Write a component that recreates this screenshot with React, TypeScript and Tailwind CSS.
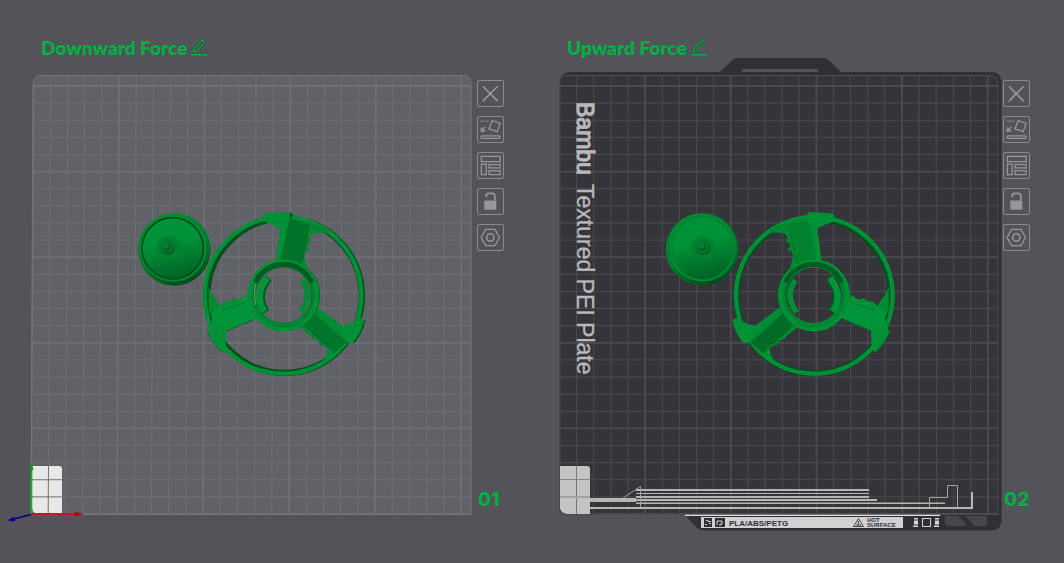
import React from "react";

type Line = { at: number; end: number; major: boolean };

const ACTIONS = ["Delete plate", "Auto orient", "Arrange objects", "Lock plate", "Plate settings"];

function ActionIcon({ name }: { name: string }) {
  return (
    <svg viewBox="1 1 26 26" className="size-full" fill="none" stroke="currentColor" strokeWidth="1.3">
      {name === "Delete plate" && <path d="M6 6.500 21.500 22M21.500 6.500 6 22" strokeWidth="1.700" />}
      {name === "Auto orient" && (
        <>
          <path d="M15.700 4.800 24 7.600 21 16.200 12.400 13.400Z" />
          <rect x="4" y="20.600" width="20" height="2.600" rx="1.300" />
          <path d="M3.500 5.500h9" strokeDasharray="1.400 .9" strokeWidth="1.600" opacity=".7" />
          <path d="M8.500 11.500 4.800 14.500M4.400 12v4l3.600-.8-2-1.600" />
        </>
      )}
      {name === "Arrange objects" && (
        <>
          <rect x="4.500" y="4.500" width="19.500" height="5.500" />
          <rect x="4.500" y="12.500" width="5" height="11" />
          <rect x="12.500" y="13" width="11.500" height="3.500" />
          <rect x="12.500" y="19.500" width="11.500" height="4" />
        </>
      )}
      {name === "Lock plate" && (
        <>
          <rect x="7.500" y="13" width="12.500" height="9.500" fill="currentColor" stroke="none" />
          <path d="M9.600 9.500V8q0-2.500 2.500-2.500h3.600q2.800 0 2.800 2.800V13" strokeWidth="1.800" />
        </>
      )}
      {name === "Plate settings" && (
        <>
          <path d="M4.200 14 9 5.600h9.600L23.400 14l-4.800 8.400H9Z" />
          <circle cx="13.800" cy="14" r="3.800" strokeWidth="1.600" />
        </>
      )}
    </svg>
  );
}

function PencilIcon() {
  return (
    <svg viewBox="0 0 16 17" className="h-[17px] w-4" fill="none" stroke="currentColor">
      <path d="M2.300 12.800 2.800 9.600 10.500 1.700q.8-.7 1.600 0l.9.9q.8.8 0 1.600L5.300 12.100Z" stroke="#2c4c3d" strokeWidth="2.200" />
      <path d="M2.300 12.800 2.800 9.600 10.500 1.700q.8-.7 1.600 0l.9.9q.8.8 0 1.600L5.300 12.100Z" strokeWidth="1.200" />
      <path d="M0 14.300h16" stroke="#2c4c3d" strokeWidth=".8" />
      <path d="M0 15.600h16" strokeWidth="1.800" />
    </svg>
  );
}

function columns(top: number, bottom: number, topPitch: number, bottomPitch: number): Line[] {
  return Array.from({ length: 26 }, (_, i) => ({
    at: top + topPitch * i,
    end: bottom + bottomPitch * i,
    major: i % 5 === 0,
  }));
}

function Grid({ cols, left, right, color }: { cols: Line[]; left: number; right: number; color: string }) {
  return (
    <g stroke={color}>
      {cols.map((c, i) => (
        <path key={i} d={`M${c.at} 75.5L${c.end} 514`} strokeWidth={c.major ? 1.8 : 1} />
      ))}
      {Array.from({ length: 26 }, (_, i) => (
        <path key={i} d={`M${left} ${86 + i * 17.12}H${right}`} strokeWidth={i % 5 === 0 ? 1.8 : 1} />
      ))}
    </g>
  );
}

function Rotor({ mirrored = false }: { mirrored?: boolean }) {
  const topPanel = mirrored ? "#00822f" : "#00722a";
  const sidePanel = mirrored ? "#006c27" : "#00752c";
  return (
    <g transform={mirrored ? "translate(937 0) scale(-1 1)" : undefined}>
      {mirrored ? (
        <circle cx="461" cy="288" r="232" fill="none" stroke="#004f1c" strokeWidth="18" />
      ) : (
        <circle cx="463.500" cy="287" r="232" fill="none" stroke="#004f1c" strokeWidth="19" />
      )}
      <circle cx="459" cy="286" r="235" fill="none" stroke="#009137" strokeWidth="13" />

      {/* upper arm */}
      <path d="M470 50 541 66Q580 80 600 100 575 95 550 99L541 108 523 168 532 205 437 190 452 84Z" fill="#008a33" />
      <path d="M478 56 541 72 517 194 449 184Z" fill={topPanel} />
      <path d="M532 95 512 180" stroke="#006b27" strokeWidth="2" />
      <path d="M545 75 588 94" stroke="#005a20" strokeWidth="2" strokeDasharray="4 3" />
      <circle cx="537" cy="121" r="7" fill="#008331" />
      <circle cx="531" cy="148" r="7" fill="#008331" />
      {!mirrored && <path d="M478 37 487 40 488 50 480 56Z" fill="#00561f" />}
      <path d="M400 42Q430 36 480 37L476 62 450 185 437 185 450 85 402 64Z" fill="#009137" />

      {/* left arm */}
      <path d="M236 262 248 285 272 320 245 350 236 330Z" fill="#008a33" />
      <path d="M246 336 268 320 282 306 290 306 300 303 316 296 328 299 345 286 385 320 384 352 288 392 236 392 246 370Z" fill="#00953a" />
      <path d="M232 394 290 372 287 440 277 458Q248 430 232 394Z" fill="#009137" />
      <path d="M288 394 368 360" stroke="#006727" strokeWidth="3" />
      <path d="M233 396Q246 430 276 457" stroke="#00682a" strokeWidth="2" fill="none" />
      <path d="M278 331 350 307M276 325 283 321" stroke="#005a20" strokeWidth="2" strokeDasharray="7 2" />
      <circle cx="287" cy="311" r="7" fill="#008b34" />
      <circle cx="312" cy="302" r="7" fill="#008b34" />

      {/* right arm */}
      <path d="M594 442 590 465Q578 488 558 495 600 482 625 452Z" fill="#009137" />
      <circle cx="552" cy="411" r="7" fill="#00802f" />
      <circle cx="574" cy="430" r="7" fill="#00802f" />
      <path d="M545 325 565 323 640 380 655 428 612 460 506 380Z" fill="#008b34" />
      <path d="M546 334 650 427 612 460 518 374Z" fill={sidePanel} />
      <path d="M546 395 584 432 594 428" stroke="#006325" strokeWidth="3" fill="none" />
      <path d="M692 354 705 360Q698 398 672 429L650 427 635 378Q670 370 692 354Z" fill="#009137" />
      {!mirrored && <path d="M704 361Q696 400 670 429" stroke="#005a20" strokeWidth="5" fill="none" />}

      {/* hub */}
      <circle cx="463" cy="286" r="97" fill="none" stroke="#006024" strokeWidth="20" />
      <circle cx="460" cy="286" r="94" fill="none" stroke="#00802f" strokeWidth="22" />
      <circle cx="460" cy="286" r="101" fill="none" stroke="#009137" strokeWidth="14" />
      <path d="M377 247A92 92 0 0 1 545 247" stroke="#005c23" strokeWidth="15" fill="none" />
      <path d="M379 322A91 91 0 0 0 510 363" stroke="#008532" strokeWidth="15" fill="none" />
      {!mirrored && <path d="M376 252Q371 286 376 316" stroke="#7b927f" strokeWidth="3" fill="none" />}
      <path d="M416 234Q374 286 408 336" stroke="#005a20" strokeWidth="23" fill="none" />
      <path d="M412 233Q370 286 404 335" stroke="#009539" strokeWidth="19" fill="none" />
      <path d="M516 241Q550 286 512 337" stroke="#008c35" strokeWidth="17" fill="none" />
      <path d="M540 245Q549 286 540 320" stroke="#006427" strokeWidth="2" strokeDasharray="7 2" fill="none" />
    </g>
  );
}

function Cone({ cx, tipX, id }: { cx: number; tipX: number; id: string }) {
  return (
    <g>
      <defs>
        <linearGradient id={`${id}-rim`} x1=".3" y1="0" x2=".7" y2="1">
          <stop offset="0" stopColor="#008c34" />
          <stop offset=".55" stopColor="#007b2d" />
          <stop offset="1" stopColor="#00491a" />
        </linearGradient>
        <linearGradient id={`${id}-face`} x1=".35" y1="0" x2=".6" y2="1">
          <stop offset="0" stopColor="#009238" />
          <stop offset=".4" stopColor="#009237" />
          <stop offset="1" stopColor="#006225" />
        </linearGradient>
      </defs>
      <circle cx={cx} cy="148" r="109" fill={`url(#${id}-rim)`} />
      <circle cx={tipX > cx ? 143 : 130} cy="146" r="95" fill="none" stroke="#009038" strokeWidth="9" opacity=".8" />
      {tipX > cx ? (
        <circle cx="143" cy="144" r="92" fill={`url(#${id}-face)`} stroke="#00611f" strokeWidth="2" strokeDasharray="8 3" />
      ) : (
        <circle cx="128" cy="145" r="92" fill={`url(#${id}-face)`} stroke="#004c1a" strokeWidth="5" />
      )}
      <circle cx={tipX > cx ? 144 : 117} cy="144" r="36" fill="#008130" />
      <circle cx={tipX} cy="145" r="21" fill="#006326" />
      <circle cx={tipX - 2} cy="142" r="17" fill="#007e2f" />
      <circle cx={tipX - 2} cy="143" r="11" fill="#00652a" />
      <circle cx={tipX - 5} cy="138" r="6" fill="#008a34" />
    </g>
  );
}

function PlainBed() {
  return (
    <svg viewBox="0 56 477 484" className="block h-auto w-full" role="img" aria-label="Plate 01">
      <defs>
        <clipPath id="plain-shape">
          <path d="M42 75H463Q471.500 75 471.500 84V514.800H30.500L33 84Q33.500 75 42 75Z" />
        </clipPath>
      </defs>
      <g clipPath="url(#plain-shape)">
        <path d="M25 70H480V520H25Z" fill="#616267" />
        <path d="M32 466H59q3 0 3 3V514H39q-7 0-7-7Z" fill="#e8e8e8" />
        <Grid cols={columns(33.5, 31, 17.12, 17.2)} left={31} right={472} color="#6f7075" />
      </g>
      <path d="M42 75.500H463Q471 75.500 471 84V514.500H31L33 84Q33.500 75.500 42 75.500Z" fill="none" stroke="#74757a" />
      <g transform="translate(130 200) scale(.33333)">
        <Cone cx={133} tipX={114} id="cone-a" />
        <Rotor />
      </g>
      <path d="M31.500 514V468" stroke="#00b71c" strokeWidth="1.600" />
      <path d="M29.500 470 31.500 462 33.500 470Z" fill="#009f12" />
      <path d="M31 514.500 12 519.500" stroke="#00007c" strokeWidth="1.600" />
      <path d="M7.500 520.500 14 516.500 15 521.500Z" fill="#000091" />
      <path d="M31 514H77" stroke="#d00000" strokeWidth="1.600" />
      <path d="M75 511.800 83.500 514 75 516.200Z" fill="#b40000" />
    </svg>
  );
}

function TexturedBed() {
  return (
    <svg viewBox="526 56 477 484" className="block h-auto w-full" role="img" aria-label="Plate 02">
      <defs>
        <clipPath id="textured-shape">
          <path d="M568 75H989Q998 75 998 84V514.500H567Q559.500 514 559.500 507V84Q560 75 568 75Z" />
        </clipPath>
      </defs>
      <path
        d="M571 72H720L733 59.500Q735 58 738 58H823Q826 58 828 59.500L841 72H991Q1001.500 72 1001.500 83V520Q1001 530.500 991 530.500H705Q700 530.500 697 527.500L685 515H567Q559 514 559 506V84Q560 72 571 72Z"
        fill="#302f34"
      />
      <rect x="742" y="69" width="76" height="3" rx="1" fill="#55545a" />
      <g clipPath="url(#textured-shape)">
        <path d="M559 75H999V515H559Z" fill="#353439" />
        <Grid cols={columns(559.5, 559.5, 17.12, 17.14)} left={559} right={998} color="#4b4b51" />
      </g>
      <path d="M568 75.500H989Q998 75.500 998 84V514.500H567Q559.500 514 559.500 507V84Q560 75.500 568 75.500Z" fill="none" stroke="#4b4b51" />

      <text
        transform="translate(577 102) rotate(90)"
        fill="#b9b9bb"
        fontFamily="'Liberation Sans', Arial, sans-serif"
        fontSize="23"
      >
        <tspan stroke="#b9b9bb" strokeWidth="1.200">Bambu</tspan>
        <tspan x="82" stroke="#b9b9bb" strokeWidth=".3">Textured PEI Plate</tspan>
      </text>

      <path d="M560 466H587q3 0 3 3V514H567q-7-1-7-7Z" fill="#c3c5c4" />
      <path d="M576.500 466V514" stroke="#77777b" />
      <path d="M560 479.500H590" stroke="#85868a" />
      <path d="M560 497H590" stroke="#a2a2a8" strokeWidth="2" />
      <g fill="#b5b6b6">
        <path d="M590 498H636V502H590Z" />
        <path d="M636 489H869V491H636ZM636 493H869V494H636ZM636 496H869V498H636ZM636 499H877V501H636ZM636 502.500H945V504H636Z" />
        <path d="M590 507H971V492H973V509H590Z" />
      </g>
      <path d="M623 498 640.500 486.500V507M929.500 507V497.500H947.500V485.500H957.500V507" fill="none" stroke="#a3a3a6" />

      <path d="M685 515.300H940" stroke="#e3e3e5" strokeWidth="1.200" />
      <rect x="701" y="517" width="202" height="11" fill="#cfd1d2" />
      <path d="M704 518H712V527H704ZM715 518H725V527H715Z" fill="#302f34" />
      <path d="M706 520.500h2v1h3M705 524.500h2M709 523.500h2M717 525v-4h5v3h-2v2" fill="none" stroke="#cfd1d2" />
      <text x="729" y="525.500" fill="#302f34" fontFamily="'Liberation Sans', Arial, sans-serif" fontSize="8" fontWeight="700">
        PLA/ABS/PETG
      </text>
      <path d="M858.500 518.500 863.500 526.500H853.500ZM858.500 521V525M856 525H861" fill="none" stroke="#45444a" />
      <g fill="#302f34" fontFamily="'Liberation Sans', Arial, sans-serif" fontSize="6" fontWeight="700">
        <text x="867" y="522">HOT</text>
        <text x="867" y="527">SURFACE</text>
      </g>
      <path d="M914 518h4v1.500h-4ZM914 520.500h4v4h-4ZM913 525.500h5v1.500h-5ZM935 518h4v1.500h-4ZM935 520.500h4v4h-4ZM934 525.500h5v1.500h-5Z" fill="#d5d6d7" />
      <rect x="922.500" y="518.500" width="8" height="8" fill="none" stroke="#d5d6d7" />
      <path d="M945 516H958L966 524V526H948Q945 526 945 523ZM965 516H987V526H975Z" fill="#47464b" />

      <g transform="translate(655 200) scale(.33333)">
        <Cone cx={141} tipX={145} id="cone-b" />
        <Rotor mirrored />
      </g>
    </svg>
  );
}

function Plate({ title, number, children }: { title: string; number: string; children: React.ReactNode }) {
  return (
    <section className="min-w-0">
      <header className="flex h-14 items-end gap-1 pl-[41px] text-[#00ae42]">
        <h2 className="text-[19px] leading-4 font-extrabold whitespace-nowrap">{title}</h2>
        <button type="button" aria-label={`Rename ${title}`} className="cursor-pointer">
          <PencilIcon />
        </button>
      </header>
      <div className="flex">
        <div className="min-w-0 flex-1">{children}</div>
        <div className="flex w-[49px] shrink-0 flex-col gap-[9px] pt-6 pb-[30px]">
          {ACTIONS.map((name) => (
            <button
              key={name}
              type="button"
              aria-label={name}
              className="size-[27px] cursor-pointer rounded-xs border border-[#8b8a90] text-[#98979d]"
            >
              <ActionIcon name={name} />
            </button>
          ))}
          <span className="mt-auto pl-px font-['Inter',sans-serif] text-[19px] leading-5 font-extrabold text-[#00ae42]">
            {number}
          </span>
        </div>
      </div>
    </section>
  );
}

export default function App() {
  return (
    <main className="grid min-h-screen grid-cols-2 content-start bg-[#545359] pr-3 font-['Lato',sans-serif]">
      <Plate title="Downward Force" number="01">
        <PlainBed />
      </Plate>
      <Plate title="Upward Force" number="02">
        <TexturedBed />
      </Plate>
    </main>
  );
}
